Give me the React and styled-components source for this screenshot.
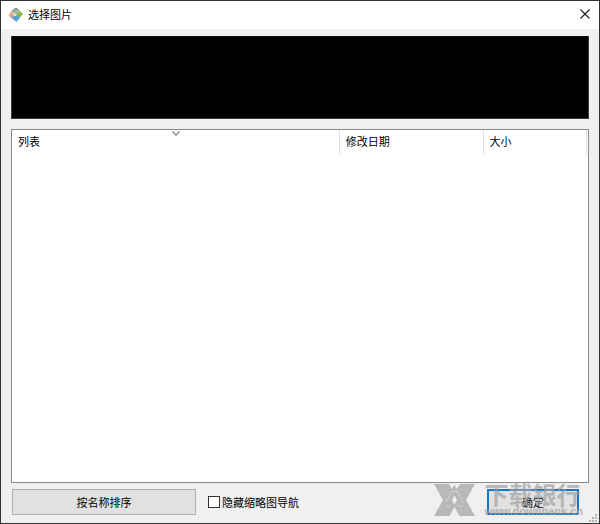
import React from "react";
import styled, { createGlobalStyle } from "styled-components";

const GlobalStyle = createGlobalStyle`
  * { box-sizing: border-box; }
  body {
    margin: 0;
    background: #f0f0f0;
    color: #000;
    font-family: "Noto Sans CJK SC", sans-serif;
    font-size: 11px;
    line-height: 16px;
  }
  button, input { font: inherit; color: inherit; }
`;

const Dialog = styled.main`
  position: relative;
  display: flex;
  flex-direction: column;
  min-height: 100vh;
  border: 1px solid #343234;
  background: #f0f0f0;
`;

const TitleBar = styled.header`
  display: flex;
  align-items: center;
  height: 28px;
  padding: 0 8px 2px 7px;
  gap: 5px;
  background: #fff;
`;

const Title = styled.h1`
  flex: 1;
  margin: 0;
  font-size: 11px;
  font-weight: 400;
`;

const CloseButton = styled.button`
  display: flex;
  padding: 0;
  border: 0;
  background: none;
`;

const Content = styled.div`
  flex: 1;
  display: flex;
  flex-direction: column;
  gap: 10px;
  padding: 7px 10px 0;
`;

const Preview = styled.section`
  height: 83px;
  border: 1px solid #3a3a3a;
  border-top-color: #111;
  background: #000;
`;

const FileList = styled.section`
  flex: 1;
  padding-right: 1px;
  border: 1px solid #888a90;
  background: #fff;
`;

const Table = styled.table`
  width: 100%;
  table-layout: fixed;
  border-collapse: separate;
  border-spacing: 0;
`;

const ColumnHead = styled.th`
  position: relative;
  width: ${(p) => p.$width || "auto"};
  height: 24px;
  padding: 0 6px 2px;
  border-right: 1px solid #e2e2e2;
  font-weight: 400;
  text-align: left;
`;

const SortMark = styled.svg`
  position: absolute;
  top: 1px;
  left: calc(50% - 3px);
`;

const Footer = styled.footer`
  display: flex;
  align-items: center;
  gap: 12px;
  padding: 6px 20px 8px 11px;
`;

const Button = styled.button`
  width: ${(p) => p.$width};
  height: 26px;
  padding: 0;
  border: ${(p) => (p.$primary ? "2px solid #1875c4" : "1px solid #adadad")};
  background: #e1e1e1;
`;

const CheckLabel = styled.label`
  flex: 1;
  display: flex;
  align-items: center;
  gap: 2px;
`;

const CheckBox = styled.input`
  appearance: none;
  width: 12px;
  height: 12px;
  margin: 0;
  border: 1px solid #333;
  background: #fff;
  &:checked { background: #1875c4; }
`;

const SizeGrip = styled.svg`
  position: absolute;
  right: 2px;
  bottom: 1px;
`;

const Watermark = styled.div`
  position: absolute;
  right: 16px;
  bottom: 6px;
  display: flex;
  align-items: flex-end;
  gap: 8px;
  color: #a0a1a4;
  opacity: 0.7;
  pointer-events: none;
`;

const WatermarkText = styled.div`
  display: flex;
  flex-direction: column;
`;

const WatermarkName = styled.span`
  font-size: 24px;
  font-weight: 700;
  line-height: 22px;
`;

const WatermarkSite = styled.span`
  font-family: "Liberation Sans", sans-serif;
  font-size: 11px;
  font-weight: 700;
  line-height: 12px;
`;

const AppIcon = () => (
  <svg width="15" height="15" viewBox="0 0 15 15" aria-hidden="true">
    <path d="M8 0.5 12 4 8 8 4 4Z" fill="#8fb3a4" />
    <path d="M4 3.5 8 7.5 4.5 11.5 0.5 8Z" fill="#e5a986" />
    <path d="M11.5 3.5 15 7 11.5 11 7.5 7.5Z" fill="#7fb94a" />
    <path d="M8 7 12 11 8.5 14.5 4 11Z" fill="#4fa3d6" />
    <path d="M4 4 8 1 11.5 4" fill="none" stroke="#78888c" />
    <path d="M1 8.5 4.5 11.5 8.5 14.5" fill="none" stroke="#98a0aa" />
    <circle cx="7" cy="7.5" r="1.8" fill="#d9dcc0" />
    <circle cx="10.5" cy="5" r="1.4" fill="#d7b569" />
  </svg>
);

const WatermarkLogo = () => (
  <svg width="42" height="34" viewBox="0 0 42 34" aria-hidden="true">
    <path
      fill="currentColor"
      fillRule="evenodd"
      d="M0 1H15L18 6 20.5 2 23 6 26 1H41L32 17 41 33H25.5L20.5 24 15.5 33H0L9 17ZM20.5 12.5 18 17 20.5 21.5 23 17Z"
    />
    <path
      d="M17.5 8.5H23.5M18 8 11.500 20M23 8 29.500 20M12 23H17M24 23H29"
      fill="none"
      stroke="#f0f0f0"
      strokeWidth="0.5"
    />
  </svg>
);

const columns = [
  { name: "列表", width: "57%", sorted: true },
  { name: "修改日期", width: "25%" },
  { name: "大小" },
];

export default function App() {
  return (
    <>
      <GlobalStyle />
      <Dialog>
        <TitleBar>
          <AppIcon />
          <Title>选择图片</Title>
          <CloseButton type="button" aria-label="关闭">
            <svg width="12" height="12" viewBox="0 0 12 12">
              <path d="M1.5 1.5 10.5 10.5M10.5 1.5 1.5 10.5" stroke="#222" strokeWidth="1.2" />
            </svg>
          </CloseButton>
        </TitleBar>
        <Content>
          <Preview />
          <FileList>
            <Table>
              <thead>
                <tr>
                  {columns.map((c) => (
                    <ColumnHead key={c.name} $width={c.width} scope="col">
                      {c.name}
                      {c.sorted && (
                        <SortMark width="8" height="5" viewBox="0 0 8 5">
                          <path d="M0.5 0.5 4 4 7.5 0.5" fill="none" stroke="#8a8a8a" strokeWidth="1.4" />
                        </SortMark>
                      )}
                    </ColumnHead>
                  ))}
                </tr>
              </thead>
            </Table>
          </FileList>
        </Content>
        <Footer>
          <Button type="button" $width="184px">按名称排序</Button>
          <CheckLabel>
            <CheckBox type="checkbox" />
            隐藏缩略图导航
          </CheckLabel>
          <Button type="button" $width="92px" $primary>确定</Button>
        </Footer>
        <SizeGrip width="8" height="8" viewBox="0 0 8 8" fill="#b4b4b4" aria-hidden="true">
          <path d="M6 0h2v2H6zM3 3h2v2H3zM6 3h2v2H6zM0 6h2v2H0zM3 6h2v2H3zM6 6h2v2H6z" />
        </SizeGrip>
        <Watermark>
          <WatermarkLogo />
          <WatermarkText>
            <WatermarkName>下载银行</WatermarkName>
            <WatermarkSite>www.downbank.cn</WatermarkSite>
          </WatermarkText>
        </Watermark>
      </Dialog>
    </>
  );
}
